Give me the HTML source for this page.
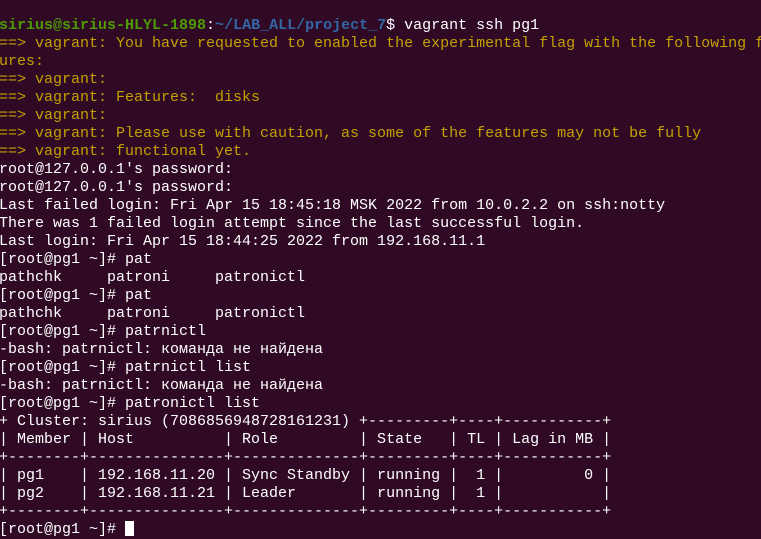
<!DOCTYPE html>
<html><head><meta charset="utf-8"><style>
html,body{margin:0;padding:0;background:#300a24;width:761px;height:527px;overflow:hidden}
pre{position:absolute;left:-1px;top:17px;margin:0;font-family:"Liberation Mono","DejaVu Sans Mono",monospace;font-size:15px;line-height:18px;color:#ffffff;letter-spacing:0px}
.g{color:#4e9a06;font-weight:bold}.b{color:#3465a4;font-weight:bold}.y{color:#c4a000}
.c{display:inline-block;width:9px;height:15px;background:#fff;vertical-align:-3px}
</style></head><body><pre><span class="g">sirius@sirius-HLYL-1898</span>:<span class="b">~/LAB_ALL/project_7</span>$ vagrant ssh pg1
<span class="y">==&gt; vagrant: You have requested to enabled the experimental flag with the following fea
ures:
==&gt; vagrant:
==&gt; vagrant: Features:  disks
==&gt; vagrant:
==&gt; vagrant: Please use with caution, as some of the features may not be fully
==&gt; vagrant: functional yet.</span>
root@127.0.0.1's password:
root@127.0.0.1's password:
Last failed login: Fri Apr 15 18:45:18 MSK 2022 from 10.0.2.2 on ssh:notty
There was 1 failed login attempt since the last successful login.
Last login: Fri Apr 15 18:44:25 2022 from 192.168.11.1
[root@pg1 ~]# pat
pathchk     patroni     patronictl
[root@pg1 ~]# pat
pathchk     patroni     patronictl
[root@pg1 ~]# patrnictl
-bash: patrnictl: команда не найдена
[root@pg1 ~]# patrnictl list
-bash: patrnictl: команда не найдена
[root@pg1 ~]# patronictl list
+ Cluster: sirius (7086856948728161231) +---------+----+-----------+
| Member | Host          | Role         | State   | TL | Lag in MB |
+--------+---------------+--------------+---------+----+-----------+
| pg1    | 192.168.11.20 | Sync Standby | running |  1 |         0 |
| pg2    | 192.168.11.21 | Leader       | running |  1 |           |
+--------+---------------+--------------+---------+----+-----------+
[root@pg1 ~]# <span class="c"></span></pre></body></html>
